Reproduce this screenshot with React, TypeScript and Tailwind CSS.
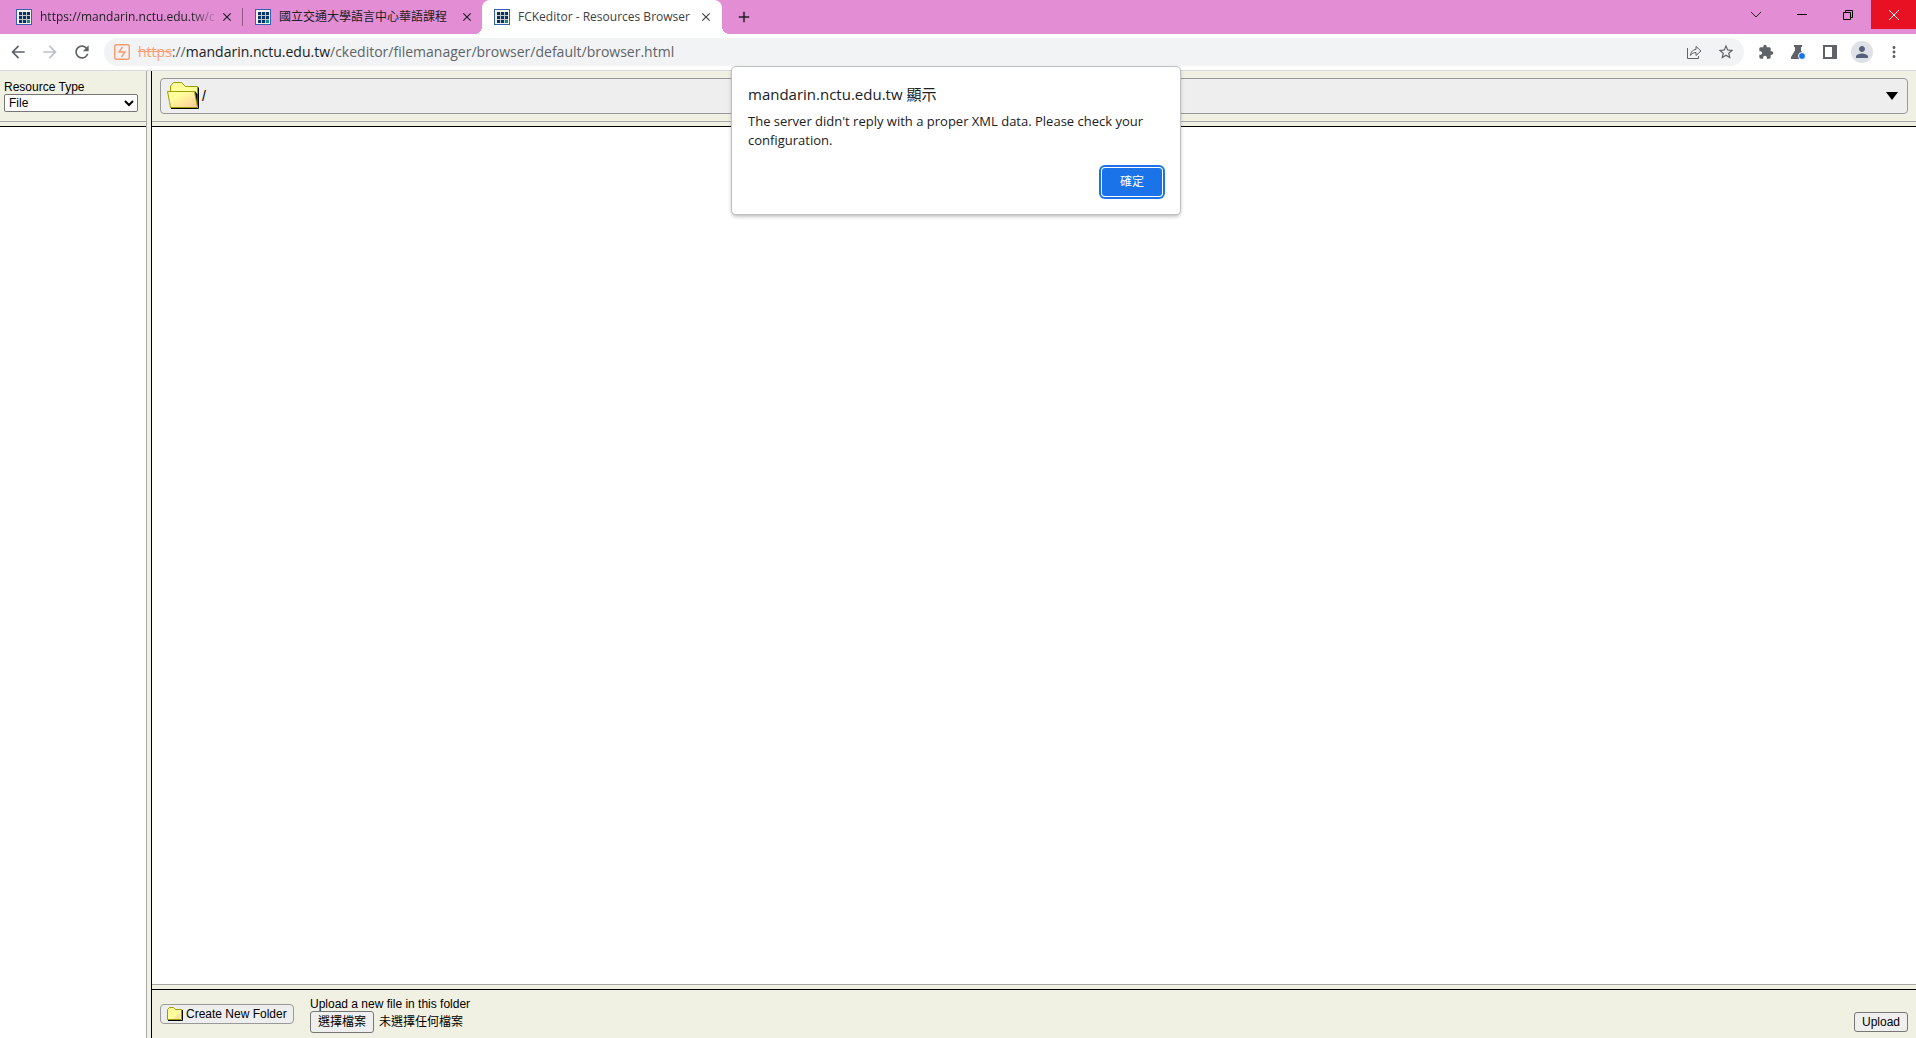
import React from 'react';
import { MdArrowBack, MdArrowForward, MdRefresh, MdClose, MdAdd, MdExtension, MdMoreVert, MdPerson, MdStarBorder } from 'react-icons/md';

const UI_FONT = "font-['Open_Sans','Noto_Sans_CJK_TC',sans-serif]";
const PAGE_FONT = "font-['Liberation_Sans','Noto_Sans_CJK_TC',sans-serif]";

const Favicon: React.FC = () => (
  <svg viewBox="0 0 16 16" className="size-4 shrink-0" shapeRendering="crispEdges" aria-hidden="true">
    <rect width="16" height="16" fill="#3560b8" />
    <rect x="1" y="1" width="14" height="14" fill="#f4f4ea" />
    <rect x="3" y="3" width="11" height="11" fill="#c4c8c8" />
    {[3, 7, 11].map((y) =>
      [3, 7, 11].map((x) => (
        <rect key={`${x}-${y}`} x={x} y={y} width="3" height="3" fill={x === 11 && y === 11 ? '#0f8f86' : '#06336b'} />
      ))
    )}
  </svg>
);

const TABS = [
  { title: 'https://mandarin.nctu.edu.tw/c', active: false },
  { title: '國立交通大學語言中心華語課程', active: false },
  { title: 'FCKeditor - Resources Browser', active: true },
];

const TabStrip: React.FC = () => (
  <header className="flex h-[34px] bg-[#e38dd4] text-[#202124]">
    <nav className="flex items-stretch pl-1" aria-label="Tabs">
      {TABS.map((tab, i) => (
        <div
          key={tab.title}
          className={
            tab.active
              ? 'relative flex w-[240px] items-center rounded-t-lg bg-white pr-2 pl-3 text-[#3c4043]'
              : `my-2 flex w-[239px] items-center pr-[7px] pl-3 ${i === 0 ? 'border-r border-[#8c5a85]' : ''}`
          }
        >
          {tab.active && (
            <>
              <span className="absolute bottom-0 -left-2 size-2 bg-[radial-gradient(circle_at_0_0,#e38dd4_8px,#fff_8px)]" />
              <span className="absolute -right-2 bottom-0 size-2 bg-[radial-gradient(circle_at_100%_0,#e38dd4_8px,#fff_8px)]" />
            </>
          )}
          <Favicon />
          <a
            href="#"
            className={`ml-2 flex-1 text-[12px] leading-4 whitespace-nowrap ${i === 0 ? '[mask-image:linear-gradient(to_right,#000_84%,transparent)]' : ''}`}
          >
            {tab.title}
          </a>
          <button type="button" aria-label="Close tab" className="flex size-4 shrink-0 items-center justify-center">
            <MdClose className="size-[14px]" />
          </button>
        </div>
      ))}
    </nav>
    <button type="button" aria-label="New tab" className="ml-3 flex w-5 items-center justify-center">
      <MdAdd className="size-[18px]" />
    </button>
    <div className="ml-auto flex h-[29px]">
      <button type="button" aria-label="Search tabs" className="flex w-[46px] items-center justify-center">
        <svg width="12" height="8" fill="none" stroke="#222"><path d="M1 1l5 5 5-5" /></svg>
      </button>
      <button type="button" aria-label="Minimize" className="flex w-[46px] items-center justify-center">
        <svg width="10" height="1"><rect width="10" height="1" /></svg>
      </button>
      <button type="button" aria-label="Restore" className="flex w-[46px] items-center justify-center">
        <svg width="10" height="10" fill="none" stroke="#000"><path d="M.5 2.500h7v7h-7zM2.500 2.500v-2h7v7h-2" /></svg>
      </button>
      <button type="button" aria-label="Close" className="flex w-[45px] items-center justify-center bg-[#e81123]">
        <svg width="10" height="10" fill="none" stroke="#fff"><path d="M0 0l10 10M10 0L0 10" /></svg>
      </button>
    </div>
  </header>
);

const AddressBar: React.FC = () => (
  <div className="flex h-[37px] items-center border-b border-[#d5d8dc] bg-white pr-[6px] pl-[2px] text-[#5f6368]">
    <button type="button" aria-label="Back" className="flex w-8 justify-center"><MdArrowBack className="size-5" /></button>
    <button type="button" aria-label="Forward" className="flex w-8 justify-center text-[#bdc1c6]"><MdArrowForward className="size-5" /></button>
    <button type="button" aria-label="Reload" className="flex w-8 justify-center"><MdRefresh className="size-5" /></button>
    <div className="relative ml-[6px] flex h-7 flex-1 items-center rounded-full bg-[#f1f3f4] pr-[2px] pl-[10px]">
      <svg viewBox="0 0 16 16" className="size-4" fill="none" stroke="#ff9b70" strokeWidth="1.500" aria-hidden="true">
        <rect x=".75" y=".75" width="14.500" height="14.500" rx="1.500" />
        <path d="M8.500 3L5 8h6L7.500 13" />
      </svg>
      <p className="ml-2 flex-1 text-[14px] leading-5 whitespace-nowrap">
        <span className="text-[#ff9b70] line-through">https</span>://<span className="text-[#202124]">mandarin.nctu.edu.tw</span>/ckeditor/filemanager/browser/default/browser.html
      </p>
      <input type="text" aria-label="Address" className="absolute inset-y-0 right-20 left-8 bg-transparent outline-none" />
      <button type="button" aria-label="Share" className="flex w-8 justify-center">
        <svg width="16" height="16" fill="none" stroke="#5f6368"><path d="M1.500 4v10.500h11V12M4.500 11.500c.5-4 2.500-6 5.500-6V2.500l5 4.500-5 4.500V8.500c-2.500 0-4 .8-5.500 3z" /></svg>
      </button>
      <button type="button" aria-label="Bookmark" className="flex w-8 justify-center"><MdStarBorder className="size-[18px]" /></button>
    </div>
    <div className="ml-[6px] flex items-center">
      <button type="button" aria-label="Extensions" className="flex w-8 justify-center"><MdExtension className="size-4" /></button>
      <button type="button" aria-label="Labs" className="flex w-8 justify-center">
        <svg width="16" height="16" fill="#5f6368"><path d="M4 1h8v2h-1v3.500l4 6.500v2H1v-2l4-6.500V3H4z" /><circle cx="12" cy="12" r="3.500" fill="#1a73e8" stroke="#fff" /></svg>
      </button>
      <button type="button" aria-label="Side panel" className="flex w-8 justify-center">
        <svg width="14" height="14"><path d="M0 0h14v14H0zM2 2v10h7V2z" fill="#5f6368" fillRule="evenodd" /></svg>
      </button>
      <button type="button" aria-label="Profile" className="flex w-8 justify-center">
        <span className="flex size-[22px] items-center justify-center rounded-full bg-[#dee1e6] text-[#56617a]"><MdPerson className="size-[18px]" /></span>
      </button>
      <button type="button" aria-label="Menu" className="flex w-8 justify-center"><MdMoreVert className="size-[18px]" /></button>
    </div>
  </div>
);

const OpenFolder: React.FC = () => (
  <svg width="32" height="28" aria-hidden="true">
    <defs>
      <linearGradient id="front" x1="0" y1="0" x2="1" y2="1">
        <stop offset=".3" stopColor="#ffff9c" />
        <stop offset="1" stopColor="#ffc89c" />
      </linearGradient>
    </defs>
    <path d="M3.500 9V4l3-3.500h8l4 4h12V24h-4z" fill="#ffff9c" stroke="#9c9c00" />
    <path d="M27 9.500h1.500l2 3V25z" fill="#000" />
    <path d="M31.500 5.500v21H4" fill="none" stroke="#000" />
    <path d="M.5 9.500h27l3 16h-27l-1-6z" fill="url(#front)" stroke="#9c9c00" />
  </svg>
);

const SmallFolder: React.FC = () => (
  <svg width="16" height="14" aria-hidden="true">
    <path d="M1 13.500h14.500V3" fill="none" stroke="#000" />
    <path d="M.5 12.500v-10l2-2h4l2 2h6v10z" fill="#ffff9c" stroke="#9c9c00" />
    <path d="M13 6v6H6z" fill="#ffe09c" />
  </svg>
);

const FrameDivider: React.FC = () => <div className="h-[6px] shrink-0 border-t border-b border-t-[#a9a9a9] border-b-black bg-[#f1f1e3]" />;

const AlertDialog: React.FC = () => (
  <div
    role="alertdialog"
    aria-labelledby="alert-title"
    className={`absolute top-[67px] left-1/2 flex w-[448px] -translate-x-[226px] flex-col rounded-[4px] bg-white px-4 pt-[15px] pb-[18px] text-[#202124] shadow-[0_0_0_1px_#bfbfbf,0_2px_4px_#0005] ${UI_FONT}`}
  >
    <h1 id="alert-title" className="text-[15px] leading-6">mandarin.nctu.edu.tw 顯示</h1>
    <p className="mt-[6px] text-[13px] leading-[19px]">The server didn't reply with a proper XML data. Please check your configuration.</p>
    <button type="button" className="mt-[18px] mr-[2px] h-7 w-[60px] self-end rounded-[3px] bg-[#1a73e8] text-[12px] text-white ring-2 ring-[#1a73e8] ring-offset-1">確定</button>
  </div>
);

export default function App() {
  return (
    <div className={`relative flex min-h-screen flex-col bg-white ${UI_FONT}`}>
      <TabStrip />
      <AddressBar />
      <main className={`flex flex-1 text-[12px] text-black ${PAGE_FONT}`}>
        <aside className="flex w-[146px] shrink-0 flex-col">
          <form className="h-[50px] bg-[#f1f1e3] px-1 pt-[9px]">
            <label htmlFor="type" className="block leading-[14px]">Resource Type</label>
            <select id="type" className="block h-[18px] w-[134px] rounded-[2px] border border-[#767676] bg-white text-[12px] leading-4">
              <option>File</option>
            </select>
          </form>
          <FrameDivider />
        </aside>
        <div className="w-[6px] shrink-0 border-r border-l border-l-[#a9a9a9] border-r-black bg-[#f1f1e3]" />
        <section className="flex flex-1 flex-col">
          <div className="h-[50px] bg-[#f1f1e3] px-2 pt-[7px]">
            <button type="button" className="flex h-9 w-full items-center rounded-[4px] border border-[#999] bg-[#eee] pr-[9px] pl-[6px]">
              <OpenFolder />
              <span className="ml-[3px] text-[14px]">/</span>
              <svg width="12" height="8" className="ml-auto" aria-hidden="true"><path d="M0 0h12L6 8z" /></svg>
            </button>
          </div>
          <FrameDivider />
          <div className="flex-1" />
          <FrameDivider />
          <form className="flex h-12 items-start bg-[#f1f1e3] px-2">
            <button type="button" className="mt-[14px] flex h-5 w-[134px] items-center gap-[3px] rounded-[4px] border border-[#999] bg-[#eee] pl-[6px] whitespace-nowrap">
              <SmallFolder />
              Create New Folder
            </button>
            <div className="ml-4 pt-[7px]">
              <p className="leading-[14px]">Upload a new file in this folder</p>
              <label className="flex items-center">
                <input type="file" className="sr-only" />
                <span className="mr-[5px] flex h-[22px] w-16 items-center justify-center rounded-[3px] border border-[#767676] bg-[#efefef]">選擇檔案</span>
                未選擇任何檔案
              </label>
            </div>
            <button type="submit" className="mt-[22px] ml-auto h-5 w-[54px] rounded-[3px] border border-[#767676] bg-[#efefef]">Upload</button>
          </form>
        </section>
      </main>
      <AlertDialog />
    </div>
  );
}
